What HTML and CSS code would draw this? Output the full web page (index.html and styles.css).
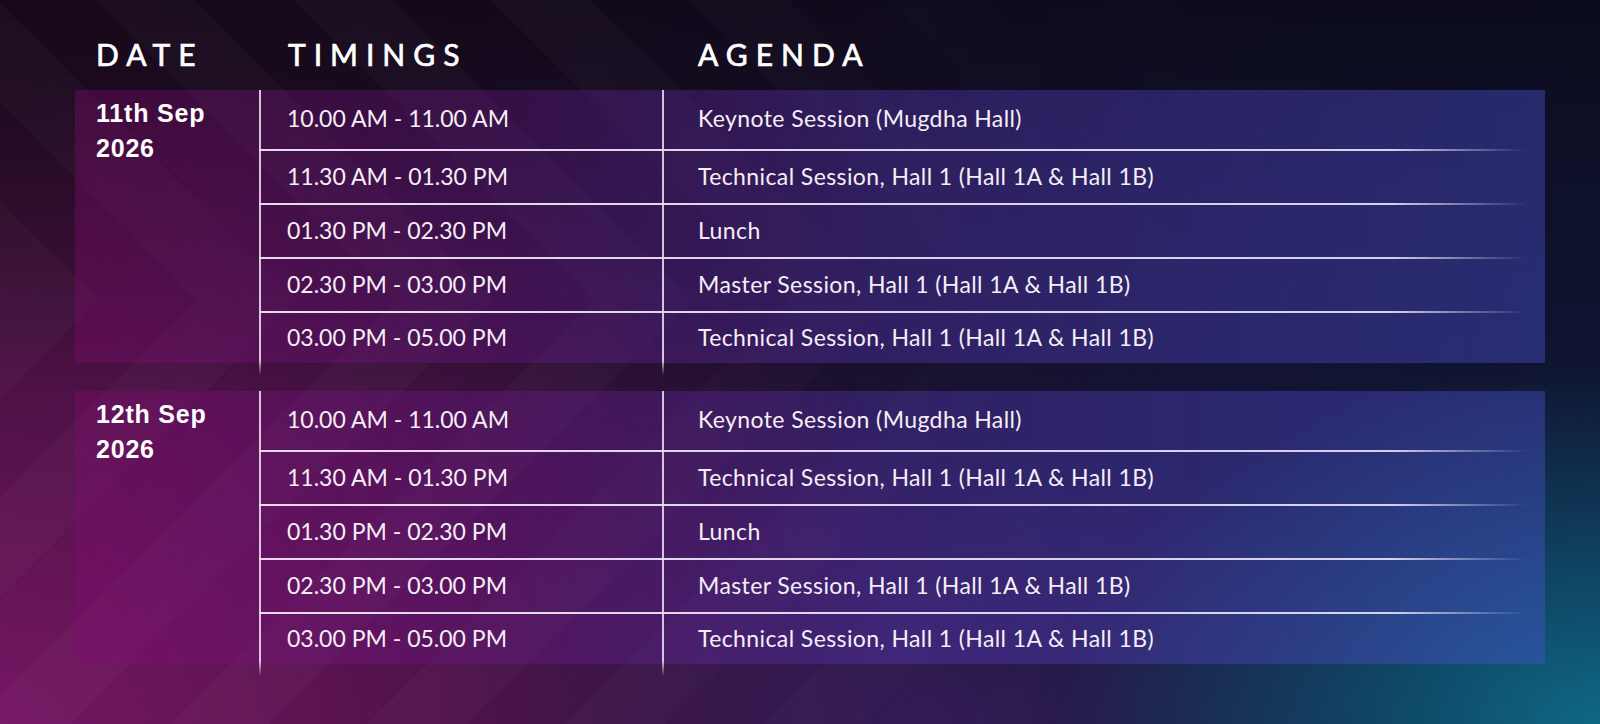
FILE: index.html
```html
<!DOCTYPE html>
<html lang="en">
<head>
<meta charset="utf-8">
<title>Agenda</title>
<link rel="stylesheet" href="styles.css">
</head>
<body>
<div class="pattern"></div>
<main class="page">
  <div class="head">
    <div class="h-date">DATE</div>
    <div class="h-time">TIMINGS</div>
    <div class="h-agenda">AGENDA</div>
  </div>

  <section class="day">
    <div class="date">11th Sep<br>2026</div>
    <div class="rows">
      <div class="row"><div class="time">10.00 AM - 11.00 AM</div><div class="agenda">Keynote Session (Mugdha Hall)</div></div>
      <div class="row"><div class="time">11.30 AM - 01.30 PM</div><div class="agenda">Technical Session, Hall 1 (Hall 1A &amp; Hall 1B)</div></div>
      <div class="row"><div class="time">01.30 PM - 02.30 PM</div><div class="agenda">Lunch</div></div>
      <div class="row"><div class="time">02.30 PM - 03.00 PM</div><div class="agenda">Master Session, Hall 1 (Hall 1A &amp; Hall 1B)</div></div>
      <div class="row"><div class="time">03.00 PM - 05.00 PM</div><div class="agenda">Technical Session, Hall 1 (Hall 1A &amp; Hall 1B)</div></div>
    </div>
  </section>

  <section class="day">
    <div class="date">12th Sep<br>2026</div>
    <div class="rows">
      <div class="row"><div class="time">10.00 AM - 11.00 AM</div><div class="agenda">Keynote Session (Mugdha Hall)</div></div>
      <div class="row"><div class="time">11.30 AM - 01.30 PM</div><div class="agenda">Technical Session, Hall 1 (Hall 1A &amp; Hall 1B)</div></div>
      <div class="row"><div class="time">01.30 PM - 02.30 PM</div><div class="agenda">Lunch</div></div>
      <div class="row"><div class="time">02.30 PM - 03.00 PM</div><div class="agenda">Master Session, Hall 1 (Hall 1A &amp; Hall 1B)</div></div>
      <div class="row"><div class="time">03.00 PM - 05.00 PM</div><div class="agenda">Technical Session, Hall 1 (Hall 1A &amp; Hall 1B)</div></div>
    </div>
  </section>
</main>
</body>
</html>
```

FILE: styles.css
```css
* { box-sizing: border-box; }

html, body {
  margin: 0;
  width: 1600px;
  height: 724px;
  overflow: hidden;
}

body {
  position: relative;
  font-family: "Lato", "Noto Sans", sans-serif;
  color: #f6eef6;
  background:
    linear-gradient(180deg, rgba(8,5,12,0.55) 0%, rgba(8,5,12,0.25) 25%, rgba(8,5,12,0) 55%),
    radial-gradient(ellipse 34% 50% at 100% 100%, rgba(14,108,138,0.95), rgba(14,108,138,0) 100%),
    radial-gradient(ellipse 30% 40% at 58% 100%, rgba(58,32,100,0.7), rgba(58,32,100,0) 100%),
    radial-gradient(ellipse 62% 90% at 0% 100%, rgba(118,22,100,1), rgba(118,22,100,0) 100%),
    linear-gradient(90deg, #2a0d2a 0%, #1c0f2c 45%, #131434 75%, #0f1432 100%);
}

/* faint chevron texture on the left side */
.pattern {
  position: absolute;
  inset: 0;
  pointer-events: none;
  background:
    repeating-linear-gradient(45deg, rgba(255,255,255,0.022) 0 70px, rgba(255,255,255,0) 70px 140px) top left / 100% 300px no-repeat,
    repeating-linear-gradient(135deg, rgba(255,255,255,0.022) 0 70px, rgba(255,255,255,0) 70px 140px) bottom left / 100% 424px no-repeat;
  -webkit-mask-image: linear-gradient(90deg, #000 0%, #000 35%, transparent 75%);
  mask-image: linear-gradient(90deg, #000 0%, #000 35%, transparent 75%);
}

.page {
  position: relative;
  padding: 0 55px 0 75px;
}

.head {
  display: grid;
  grid-template-columns: 192px 410px 1fr;
  height: 90px;
  padding-top: 40px;
  padding-left: 21px;
  font-size: 30px;
  line-height: 29px;
  font-weight: 400;
  -webkit-text-stroke: 0.7px #ffffff;
  letter-spacing: 8px;
  color: #ffffff;
}

.day {
  display: grid;
  grid-template-columns: 184px 1fr;
  background: linear-gradient(90deg,
    rgba(130,10,110,0.36) 0%,
    rgba(105,25,140,0.36) 30%,
    rgba(85,55,180,0.4) 55%,
    rgba(75,80,205,0.42) 100%);
  margin-bottom: 28px;
}

.date {
  font-family: "Liberation Sans", "Arimo", sans-serif;
  font-weight: 700;
  font-size: 25px;
  line-height: 35px;
  letter-spacing: 0.8px;
  padding: 6px 0 0 21px;
  color: #ffffff;
}

.rows {
  position: relative;
}

.rows::before,
.rows::after {
  content: "";
  position: absolute;
  top: 0;
  bottom: -12px;
  width: 2px;
  background: linear-gradient(180deg, rgba(238,226,242,0.85) 0, rgba(238,226,242,0.85) calc(100% - 15px), rgba(238,226,242,0) 100%);
}

.rows::before { left: 0; }
.rows::after { left: 403px; }

.row {
  display: grid;
  grid-template-columns: 403px 1fr;
  height: 54px;
  font-size: 23px;
}

.row:first-child { height: 59px; }
.row:last-child { height: 52px; }

.row + .row {
  border-top: 2px solid;
  border-image: linear-gradient(90deg, rgba(240,228,245,0.95) 0%, rgba(232,226,250,0.9) 88%, rgba(232,226,250,0) 98.5%) 1;
}

.time,
.agenda {
  display: flex;
  align-items: center;
  white-space: nowrap;
  padding-bottom: 3px;
}

.time { padding-left: 28px; }
.agenda { padding-left: 36px; letter-spacing: 0.4px; }
```
